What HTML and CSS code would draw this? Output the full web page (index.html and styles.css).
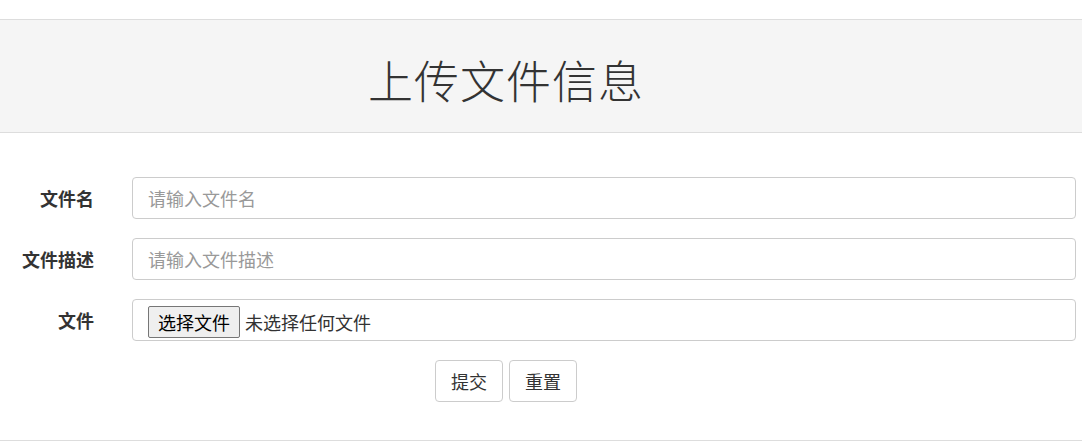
FILE: index.html
```html
<!DOCTYPE html>
<html lang="zh-CN">
<head>
    <meta charset="UTF-8">
    <meta name="viewport" content="width=device-width, initial-scale=1.0">
    <title>上传文件信息</title>
    <link rel="stylesheet" href="styles.css">
</head>
<body>

    <div class="page-header">
        <h1>上传文件信息</h1>
    </div>

    <form class="upload-form" onsubmit="return false;">
        <div class="form-row">
            <label for="fileName">文件名</label>
            <input type="text" id="fileName" placeholder="请输入文件名" />
        </div>

        <div class="form-row">
            <label for="fileDesc">文件描述</label>
            <input type="text" id="fileDesc" placeholder="请输入文件描述" />
        </div>

        <div class="form-row">
            <label for="fileInput">文件</label>
            <div class="file-box">
                <input type="file" id="fileInput" class="file-hidden" />
                <label for="fileInput" class="file-btn">选择文件</label>
                <span class="file-status">未选择任何文件</span>
            </div>
        </div>

        <div class="form-actions">
            <button type="submit" class="btn">提交</button>
            <button type="reset" class="btn">重置</button>
        </div>
    </form>

    <div class="page-footer"></div>

</body>
</html>
```

FILE: styles.css
```css
body {
    margin: 0;
    padding: 19px 0 0;
    background-color: white;
    color: #333;
    font-family: "Noto Sans CJK SC", "Liberation Sans", sans-serif;
    font-size: 18px;
}

.page-header {
    background-color: #f5f5f5;
    border-top: 1px solid #ddd;
    border-bottom: 1px solid #ddd;
    height: 112px;
}

.page-header h1 {
    width: 1012px;
    margin: 0;
    padding-top: 30px;
    text-align: center;
    font-size: 45px;
    font-weight: 300;
    line-height: 60px;
    letter-spacing: 1px;
    color: #333;
}

.upload-form {
    padding-top: 44px;
}

.form-row {
    display: flex;
    align-items: center;
    margin-bottom: 19px;
}

.form-row > label {
    width: 94px;
    flex-shrink: 0;
    text-align: right;
    font-weight: bold;
    margin-right: 38px;
}

.form-row input[type="text"],
.file-box {
    width: 944px;
    height: 42px;
    box-sizing: border-box;
    border: 1px solid #ccc;
    border-radius: 4px;
    font-family: inherit;
    font-size: 18px;
    color: #333;
}

.form-row input[type="text"] {
    padding: 0 15px;
    outline: none;
}

.form-row input::placeholder {
    color: #999;
}

.file-box {
    display: flex;
    align-items: center;
    padding: 4px 0 0 15px;
}

.file-hidden {
    display: none;
}

.file-btn {
    display: inline-block;
    box-sizing: border-box;
    height: 32px;
    line-height: 30px;
    padding: 0 9px;
    background-color: #efefef;
    border: 1px solid #767676;
    border-radius: 2px;
    color: #000;
    cursor: pointer;
}

.file-status {
    margin-left: 5px;
    color: #333;
}

.form-actions {
    display: flex;
    justify-content: center;
    gap: 6px;
    width: 1012px;
    margin-top: 1px;
    padding-bottom: 38px;
}

.btn {
    height: 42px;
    padding: 0 15px;
    background-color: white;
    border: 1px solid #ccc;
    border-radius: 4px;
    font-family: inherit;
    font-size: 18px;
    color: #333;
    cursor: pointer;
}

.btn:hover {
    background-color: #e6e6e6;
}

.page-footer {
    border-top: 1px solid #ddd;
}
```
